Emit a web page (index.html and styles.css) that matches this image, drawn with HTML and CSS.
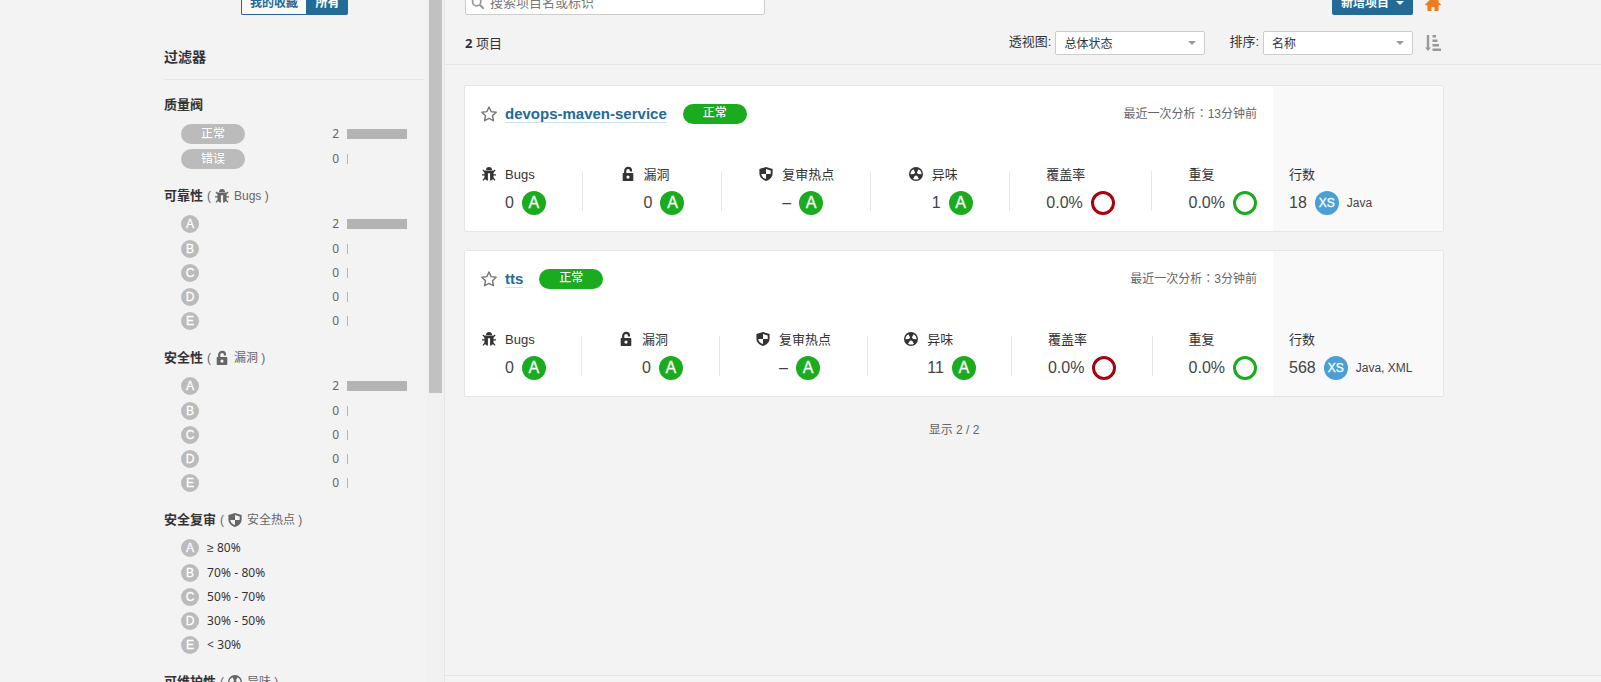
FILE: index.html
```html
<!DOCTYPE html>
<html lang="zh-CN">
<head>
    <meta charset="UTF-8">
    <meta name="viewport" content="width=device-width, initial-scale=1.0">
    <title>项目</title>
    <link rel="stylesheet" href="styles.css">
</head>
<body>
    <svg class="sprite" width="0" height="0">
        <symbol id="i-bug" viewBox="0 0 16 16">
            <path d="M5 3.900a3 2.900 0 0 1 6 0z"/>
            <path d="M3.500 4.600h9v6.400c0 2-1.300 3.200-3.400 3.700V7.200H6.900v7.500C4.800 14.200 3.500 13 3.500 11z"/>
            <path d="M4 6.200 1.900 3.900M12 6.200 14.100 3.900M4 8.900H1M12 8.900h3M4.500 11.500 2 14.400M11.500 11.500 14 14.400" fill="none" stroke="currentColor" stroke-width="1.300"/>
        </symbol>
        <symbol id="i-lock" viewBox="0 0 16 16">
            <path d="M5.200 8V4.800a2.900 2.900 0 0 1 5.800 0v.6" fill="none" stroke="currentColor" stroke-width="2.200"/>
            <path fill-rule="evenodd" d="M3.400 7h9.200q.7 0 .7.700v6.600q0 .7-.7.700H3.400q-.7 0-.7-.7V7.700q0-.7.700-.7zM8 9.500a1.600 1.600 0 0 0 0 3.200A1.600 1.600 0 0 0 8 9.500z"/>
        </symbol>
        <symbol id="i-shield" viewBox="0 0 16 16">
            <path fill-rule="evenodd" d="M8 1l6.600 2v4.500c0 3.500-2.500 6-6.600 7.500-4.100-1.500-6.600-4-6.600-7.500V3zM8 3V8h4.700V4.400zM8 8H3.300c.2 2.400 1.800 4 4.700 5.100z"/>
        </symbol>
        <symbol id="i-smell" viewBox="0 0 16 16">
            <path fill-rule="evenodd" d="M8 1a7 7 0 1 0 0 14A7 7 0 1 0 8 1zM5.080 12.660A5.500 5.500 0 0 0 10.920 12.660L8.950 9.530A1.800 1.800 0 0 1 7.050 9.530zM10.580 3.140A5.500 5.500 0 0 1 13.500 8.190L9.800 8.060A1.800 1.800 0 0 0 8.840 6.410zM2.500 8.190A5.500 5.500 0 0 1 5.420 3.140L7.160 6.410A1.800 1.800 0 0 0 6.200 8.060z"/>
        </symbol>
        <symbol id="i-star" viewBox="0 0 16 16">
            <path d="M8 1l2.150 4.600 5.050.650-3.700 3.500.95 5L8 12.300l-4.450 2.450.95-5L.8 6.250l5.050-.65z" fill="none" stroke="currentColor" stroke-width="1.400" stroke-linejoin="round"/>
        </symbol>
    </svg>

    <div class="page">
        <aside class="sidebar">
            <div class="sidebar-inner">
                <div class="toggle">
                    <button class="toggle-btn">我的收藏</button>
                    <button class="toggle-btn active">所有</button>
                </div>
                <h2 class="filters-title">过滤器</h2>

                <section class="facet facet-gate">
                    <h3 class="facet-header">质量阀</h3>
                    <div class="facet-item"><span class="level">正常</span><span class="count">2</span><span class="bar"><i style="width: 60px"></i></span></div>
                    <div class="facet-item"><span class="level">错误</span><span class="count">0</span><span class="bar"><i style="width: 1px"></i></span></div>
                </section>

                <section class="facet">
                    <h3 class="facet-header">可靠性<small>(<svg class="icon"><use href="#i-bug"/></svg>Bugs )</small></h3>
                    <div class="facet-item"><span class="rating-small">A</span><span class="count">2</span><span class="bar"><i style="width: 60px"></i></span></div>
                    <div class="facet-item"><span class="rating-small">B</span><span class="count">0</span><span class="bar"><i style="width: 1px"></i></span></div>
                    <div class="facet-item"><span class="rating-small">C</span><span class="count">0</span><span class="bar"><i style="width: 1px"></i></span></div>
                    <div class="facet-item"><span class="rating-small">D</span><span class="count">0</span><span class="bar"><i style="width: 1px"></i></span></div>
                    <div class="facet-item"><span class="rating-small">E</span><span class="count">0</span><span class="bar"><i style="width: 1px"></i></span></div>
                </section>

                <section class="facet">
                    <h3 class="facet-header">安全性<small>(<svg class="icon"><use href="#i-lock"/></svg>漏洞 )</small></h3>
                    <div class="facet-item"><span class="rating-small">A</span><span class="count">2</span><span class="bar"><i style="width: 60px"></i></span></div>
                    <div class="facet-item"><span class="rating-small">B</span><span class="count">0</span><span class="bar"><i style="width: 1px"></i></span></div>
                    <div class="facet-item"><span class="rating-small">C</span><span class="count">0</span><span class="bar"><i style="width: 1px"></i></span></div>
                    <div class="facet-item"><span class="rating-small">D</span><span class="count">0</span><span class="bar"><i style="width: 1px"></i></span></div>
                    <div class="facet-item"><span class="rating-small">E</span><span class="count">0</span><span class="bar"><i style="width: 1px"></i></span></div>
                </section>

                <section class="facet">
                    <h3 class="facet-header">安全复审<small>(<svg class="icon"><use href="#i-shield"/></svg>安全热点 )</small></h3>
                    <div class="facet-item"><span class="rating-small">A</span><span class="range"><span class="sign">≥</span> 80%</span></div>
                    <div class="facet-item"><span class="rating-small">B</span><span class="range">70% - 80%</span></div>
                    <div class="facet-item"><span class="rating-small">C</span><span class="range">50% - 70%</span></div>
                    <div class="facet-item"><span class="rating-small">D</span><span class="range">30% - 50%</span></div>
                    <div class="facet-item"><span class="rating-small">E</span><span class="range">&lt; 30%</span></div>
                </section>

                <section class="facet">
                    <h3 class="facet-header">可维护性<small>(<svg class="icon"><use href="#i-smell"/></svg>异味 )</small></h3>
                </section>
            </div>
            <div class="scrollbar"><div class="scrollbar-thumb"></div></div>
        </aside>

        <main class="main">
            <header class="topbar">
                <div class="topbar-row">
                    <div class="search">
                        <svg class="search-icon" viewBox="0 0 16 16"><circle cx="6.500" cy="6.500" r="4.700" fill="none" stroke="currentColor" stroke-width="2"/><path d="M10 10l4.500 4.500" stroke="currentColor" stroke-width="2.400"/></svg>
                        <span>搜索项目名或标识</span>
                    </div>
                    <button class="create-btn">新增项目 <span class="caret"></span></button>
                    <svg class="home" viewBox="0 0 16 16"><path d="M8 .8 0 8.600l.5.600h1.900V14.300q0 .7.700.700H6.500v-4h3v4h3.400q.7 0 .7-.7V9.200h1.900l.5-.6-2.500-2.400V2h-2v2.200z"/></svg>
                </div>
                <div class="topbar-row second">
                    <div class="total"><strong>2</strong> 项目</div>
                    <label class="select-label">透视图:</label>
                    <div class="select">总体状态<span class="caret"></span></div>
                    <label class="select-label sort-label">排序:</label>
                    <div class="select">名称<span class="caret"></span></div>
                    <svg class="sort" viewBox="0 0 16 16"><path d="M1.800 0h2.400v12.500H6L3 16 0 12.500h1.800zM7.500 0H11v2.400H7.500zM7.500 4.500H12.500v2.400H7.500zM7.500 9H14v2.400H7.500zM7.500 13.500H16v2.400H7.500z"/></svg>
                </div>
            </header>

            <div class="projects">
                <article class="card">
                    <div class="card-main">
                        <div class="card-header">
                            <svg class="icon star"><use href="#i-star"/></svg>
                            <a class="card-name">devops-maven-service</a>
                            <span class="level ok">正常</span>
                            <span class="card-date">最近一次分析<span class="colon" lang="zh-TW">：</span>13分钟前</span>
                        </div>
                        <div class="measures">
                            <div class="measure">
                                <div class="measure-label"><svg class="icon"><use href="#i-bug"/></svg><span class="latin">Bugs</span></div>
                                <div class="measure-value">0<span class="rating">A</span></div>
                            </div>
                            <div class="divider"></div>
                            <div class="measure">
                                <div class="measure-label"><svg class="icon"><use href="#i-lock"/></svg><span>漏洞</span></div>
                                <div class="measure-value">0<span class="rating">A</span></div>
                            </div>
                            <div class="divider"></div>
                            <div class="measure">
                                <div class="measure-label"><svg class="icon"><use href="#i-shield"/></svg><span>复审热点</span></div>
                                <div class="measure-value">–<span class="rating">A</span></div>
                            </div>
                            <div class="divider"></div>
                            <div class="measure">
                                <div class="measure-label"><svg class="icon"><use href="#i-smell"/></svg><span>异味</span></div>
                                <div class="measure-value">1<span class="rating">A</span></div>
                            </div>
                            <div class="divider"></div>
                            <div class="measure plain">
                                <div class="measure-label"><span>覆盖率</span></div>
                                <div class="measure-value">0.0%<span class="ring red"></span></div>
                            </div>
                            <div class="divider"></div>
                            <div class="measure plain">
                                <div class="measure-label"><span>重复</span></div>
                                <div class="measure-value">0.0%<span class="ring"></span></div>
                            </div>
                        </div>
                    </div>
                    <div class="card-side">
                        <div class="measure plain">
                            <div class="measure-label"><span>行数</span></div>
                            <div class="measure-value">18<span class="size">XS</span><span class="langs">Java</span></div>
                        </div>
                    </div>
                </article>

                <article class="card">
                    <div class="card-main">
                        <div class="card-header">
                            <svg class="icon star"><use href="#i-star"/></svg>
                            <a class="card-name">tts</a>
                            <span class="level ok">正常</span>
                            <span class="card-date">最近一次分析<span class="colon" lang="zh-TW">：</span>3分钟前</span>
                        </div>
                        <div class="measures">
                            <div class="measure">
                                <div class="measure-label"><svg class="icon"><use href="#i-bug"/></svg><span class="latin">Bugs</span></div>
                                <div class="measure-value">0<span class="rating">A</span></div>
                            </div>
                            <div class="divider"></div>
                            <div class="measure">
                                <div class="measure-label"><svg class="icon"><use href="#i-lock"/></svg><span>漏洞</span></div>
                                <div class="measure-value">0<span class="rating">A</span></div>
                            </div>
                            <div class="divider"></div>
                            <div class="measure">
                                <div class="measure-label"><svg class="icon"><use href="#i-shield"/></svg><span>复审热点</span></div>
                                <div class="measure-value">–<span class="rating">A</span></div>
                            </div>
                            <div class="divider"></div>
                            <div class="measure">
                                <div class="measure-label"><svg class="icon"><use href="#i-smell"/></svg><span>异味</span></div>
                                <div class="measure-value">11<span class="rating">A</span></div>
                            </div>
                            <div class="divider"></div>
                            <div class="measure plain">
                                <div class="measure-label"><span>覆盖率</span></div>
                                <div class="measure-value">0.0%<span class="ring red"></span></div>
                            </div>
                            <div class="divider"></div>
                            <div class="measure plain">
                                <div class="measure-label"><span>重复</span></div>
                                <div class="measure-value">0.0%<span class="ring"></span></div>
                            </div>
                        </div>
                    </div>
                    <div class="card-side">
                        <div class="measure plain">
                            <div class="measure-label"><span>行数</span></div>
                            <div class="measure-value">568<span class="size">XS</span><span class="langs">Java, XML</span></div>
                        </div>
                    </div>
                </article>

                <p class="showing">显示 2 / 2</p>
            </div>
            <footer class="footer"></footer>
        </main>
    </div>
</body>
</html>
```
FILE: styles.css
```css
* {
    margin: 0;
    padding: 0;
    box-sizing: border-box;
}

body {
    background: #f3f3f3;
    color: #333;
    font-family: "Liberation Sans", "Noto Sans CJK SC", sans-serif;
    font-size: 13px;
    overflow: hidden;
}

button {
    font-family: inherit;
    border: none;
}

.sprite {
    display: none;
}

.icon {
    width: 16px;
    height: 16px;
    fill: currentColor;
    flex: none;
}

.page {
    display: flex;
    height: 682px;
    overflow: hidden;
}

/* Sidebar */
.sidebar {
    display: flex;
    justify-content: flex-end;
    width: 445px;
    flex: none;
    border-right: 1px solid #e6e6e6;
    overflow: hidden;
}

.sidebar-inner {
    width: 260px;
    margin-right: 3px;
}

.scrollbar {
    width: 17px;
    padding: 0 2px;
    background: #f1f1f1;
}

.scrollbar-thumb {
    height: 393px;
    background: #c1c1c1;
}

/* The list is scrolled, so its first row starts above the window */
.toggle {
    display: flex;
    width: 107px;
    margin: -9px 0 0 77px;
}

.toggle-btn {
    width: 65px;
    height: 24px;
    border: 1px solid #236a97;
    border-right: none;
    border-radius: 2px 0 0 2px;
    background: #f9f9f9;
    color: #236a97;
    font-size: 12px;
    font-weight: bold;
    line-height: 22px;
    white-space: nowrap;
}

.toggle-btn.active {
    width: 42px;
    border-radius: 0 2px 2px 0;
    background: #236a97;
    color: #fff;
}

.filters-title {
    height: 65px;
    padding-top: 32px;
    border-bottom: 1px solid #e6e6e6;
    font-size: 14px;
    line-height: 20px;
}

.facet {
    margin-bottom: 15px;
}

.facet-gate {
    margin-top: 15px;
}

.facet-header {
    display: flex;
    align-items: center;
    height: 20px;
    margin-bottom: 6px;
    font-size: 13px;
    line-height: 20px;
}

.facet-gate .facet-header {
    margin-bottom: 7px;
}

.facet-header small {
    display: flex;
    align-items: center;
    margin-left: 4px;
    color: #666;
    font-size: 12px;
    font-weight: normal;
    white-space: pre;
}

.facet-header .icon {
    margin: 0 4px 0 3px;
}

.facet-item {
    display: flex;
    align-items: center;
    height: 24px;
    padding: 0 17px;
    font-family: "Noto Sans", "Noto Sans CJK SC", sans-serif;
    font-size: 12px;
}

.facet-header + .facet-item {
    margin-bottom: 1px;
}

.level {
    width: 64px;
    height: 20px;
    border-radius: 10px;
    background: #bbb;
    color: #fff;
    font-size: 12px;
    font-weight: 500;
    line-height: 19px;
    text-align: center;
    text-shadow: 0 0 1px rgba(0, 0, 0, 0.2);
}

.level.ok {
    margin-left: 16px;
    background: #1aab1f;
}

.rating-small {
    width: 18px;
    height: 18px;
    border-radius: 50%;
    background: #bbb;
    color: #fff;
    font-family: "Liberation Sans", sans-serif;
    font-size: 12px;
    line-height: 18px;
    text-align: center;
    -webkit-text-stroke: 0.3px #fff;
}

.count {
    margin-left: auto;
    padding-bottom: 1px;
    color: #666;
}

.bar {
    width: 60px;
    margin-left: 8px;
}

.bar i {
    display: block;
    height: 10px;
    background: #b4b4b4;
}

.range {
    margin-left: 8px;
    padding-bottom: 1px;
    letter-spacing: 0.1px;
}

.range .sign {
    font-family: "Liberation Sans", sans-serif;
}

/* Main column */
.main {
    display: flex;
    flex-direction: column;
    flex: 1;
}

.topbar {
    height: 65px;
    padding: 0 160px 0 20px;
    border-bottom: 1px solid #e6e6e6;
}

.topbar-row {
    display: flex;
    align-items: center;
    height: 24px;
    margin-top: -9px;
}

.topbar-row.second {
    margin-top: 16px;
}

.search {
    display: flex;
    align-items: center;
    width: 300px;
    height: 24px;
    margin-right: auto;
    padding-left: 5px;
    border: 1px solid #ccc;
    border-radius: 2px;
    background: #fff;
    color: #777;
}

.search span {
    padding-bottom: 3px;
}

.search-icon {
    width: 14px;
    height: 14px;
    margin-right: 5px;
    color: #999;
}

.create-btn {
    display: flex;
    align-items: center;
    width: 81px;
    height: 24px;
    padding: 0 0 3px 9px;
    border-radius: 2px;
    background: #236a97;
    color: #fff;
    font-size: 12px;
    font-weight: bold;
}

.caret {
    border: 4px solid transparent;
    border-top-color: currentColor;
    border-bottom: none;
}

.create-btn .caret {
    margin: 3px 0 0 7px;
}

.home {
    width: 16px;
    height: 16px;
    margin: 1px 0 0 12px;
    fill: #ed7d20;
}

.total {
    margin-right: auto;
    line-height: 20px;
}

.total strong {
    font-family: "Noto Sans", sans-serif;
}

.select-label {
    padding: 0 4px 5px 0;
}

.sort-label {
    margin-left: 24px;
}

.select {
    display: flex;
    align-items: center;
    justify-content: space-between;
    width: 150px;
    height: 24px;
    padding: 0 8px 2px 8px;
    border: 1px solid #ccc;
    border-radius: 2px;
    background: #fff;
    font-size: 12px;
}

.select .caret {
    margin-top: 2px;
    color: #999;
}

.sort {
    width: 16px;
    height: 16px;
    margin-left: 12px;
    fill: #999;
}

/* Project cards */
.projects {
    flex: 1;
    padding: 20px 157px 0 19px;
}

.card {
    display: flex;
    height: 147px;
    margin-bottom: 18px;
    border: 1px solid #e6e6e6;
    border-radius: 2px;
    background: #fff;
}

.card-main {
    flex: 1;
    padding: 16px;
}

.card-side {
    width: 170px;
    padding: 79px 16px 0;
    background: #f9f9f9;
}

.card-header {
    display: flex;
    align-items: center;
    height: 24px;
}

.star {
    color: #777;
}

.card-name {
    height: 18px;
    margin-left: 8px;
    border-bottom: 1px solid #cae3f2;
    color: #236a97;
    font-size: 15px;
    font-weight: bold;
    line-height: 18px;
}

.card-date {
    margin-left: auto;
    padding-bottom: 2px;
    color: #666;
    font-size: 12px;
    line-height: 18px;
}

/* The TC face centres the full-width colon in its box */
.colon {
    font-family: "Noto Sans CJK TC", sans-serif;
}

.measures {
    display: flex;
    justify-content: space-between;
    margin-top: 39px;
}

.divider {
    width: 1px;
    height: 40px;
    margin-top: 6px;
    background: #e6e6e6;
}

.measure-label {
    display: flex;
    align-items: center;
    gap: 8px;
    height: 18px;
}

.measure-label span {
    padding-bottom: 2px;
}

.measure-label .latin {
    padding-bottom: 0;
}

.measure-value {
    display: flex;
    align-items: center;
    gap: 8px;
    height: 24px;
    margin-top: 8px;
    padding-left: 24px;
    color: #444;
    font-size: 16px;
}

.plain .measure-value {
    padding-left: 0;
}

.rating,
.ring,
.size {
    width: 24px;
    height: 24px;
    border-radius: 50%;
    background: #1aab1f;
    color: #fff;
    line-height: 24px;
    text-align: center;
    -webkit-text-stroke: 0.3px #fff;
}

.ring {
    border: 3px solid #1aab1f;
    background: none;
}

.ring.red {
    border-color: #a4030f;
}

.size {
    background: #4b9fd5;
    font-size: 12px;
}

.langs {
    font-size: 12px;
}

.showing {
    margin-top: 24px;
    color: #666;
    font-size: 12px;
    line-height: 18px;
    text-align: center;
}

.footer {
    height: 7px;
    border-top: 1px solid #e6e6e6;
}
```
